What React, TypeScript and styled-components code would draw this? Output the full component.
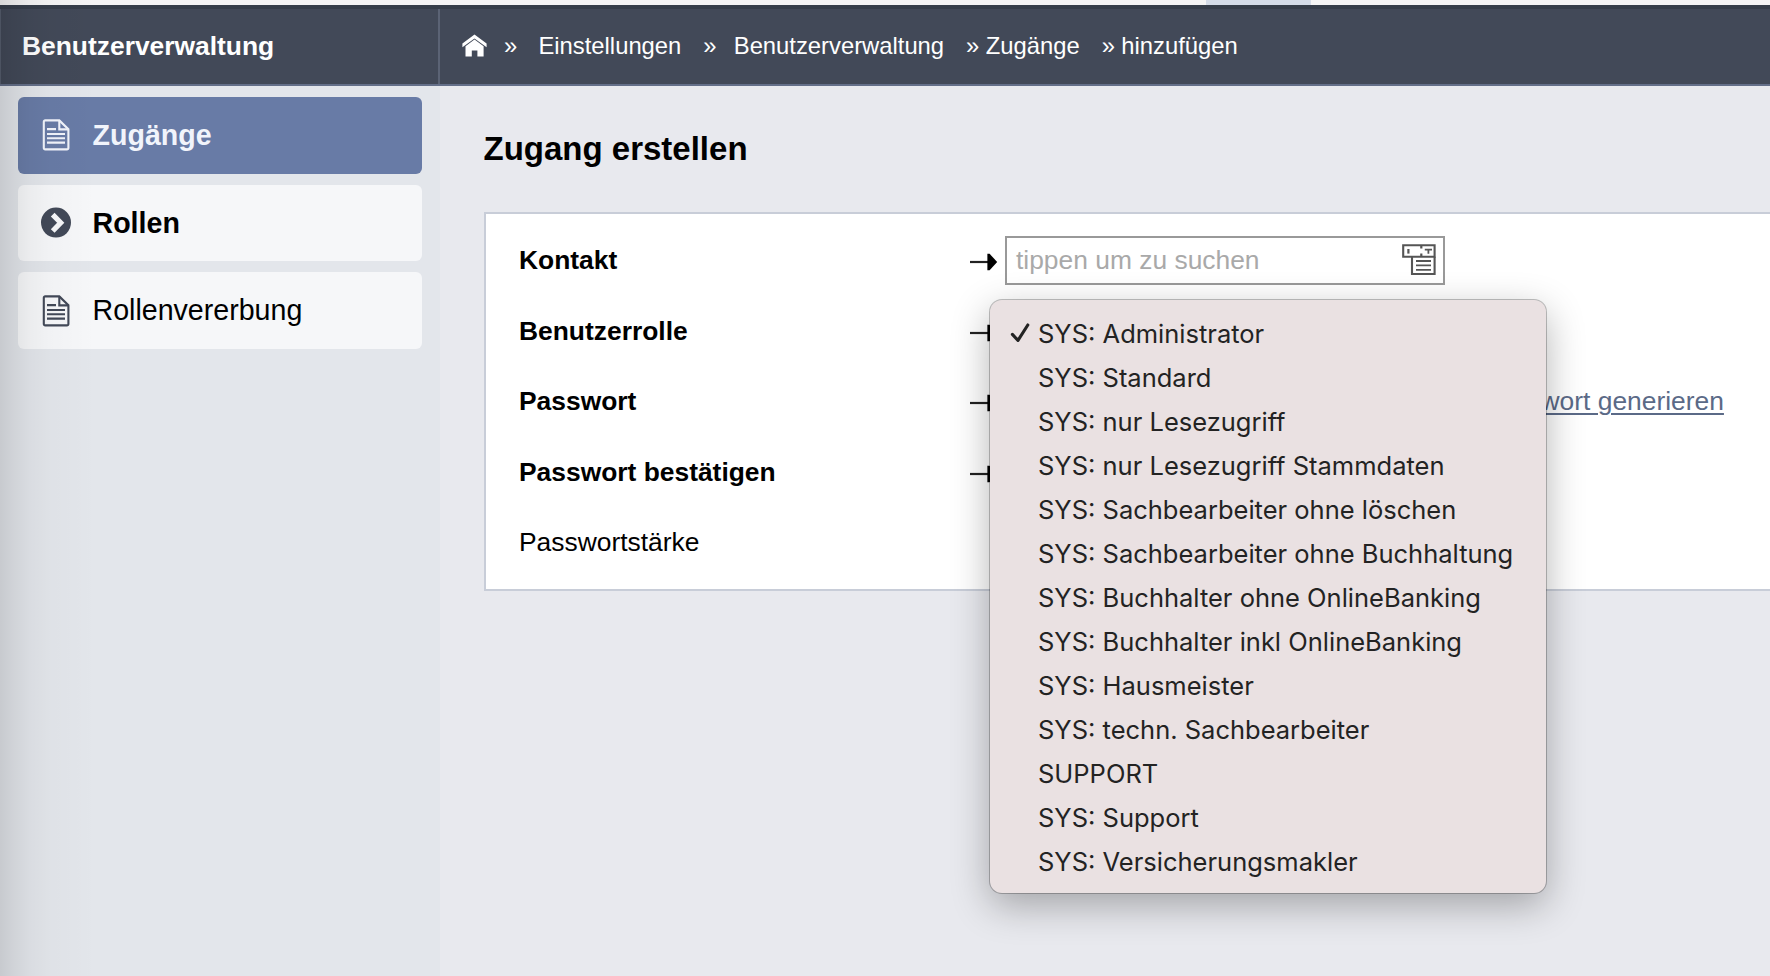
import React from 'react';
import styled, { createGlobalStyle } from 'styled-components';

const GlobalStyle = createGlobalStyle`
  * { box-sizing: border-box; }
  body {
    margin: 0;
    overflow: hidden;
    font-family: 'Liberation Sans', Arial, sans-serif;
    font-size: 26.4px;
    color: #000;
    background: #e8e9ee;
  }
`;

const Page = styled.div`
  position: relative;
  width: 1770px;
  height: 976px;
  overflow: hidden;
  display: flex;
  flex-direction: column;
`;

const TabStrip = styled.div`
  flex: none;
  height: 5px;
  background: #f5f5f5;
  padding-left: 1206px;
`;

const ActiveTab = styled.div`
  width: 105px;
  height: 5px;
  background: #d5dce8;
`;

const Header = styled.header`
  flex: none;
  height: 81px;
  display: flex;
  border-top: 4px solid #363e4a;
  border-bottom: 2px solid #646f89;
  background: #424958;
  color: #fff;
`;

const HeaderTitle = styled.div`
  width: 440px;
  padding: 0 0 1px 21px;
  display: flex;
  align-items: center;
  border-left: 1px solid #565e6e;
  border-right: 2px solid #5b6375;
  font-weight: bold;
`;

const Breadcrumbs = styled.nav`
  display: flex;
  align-items: center;
  padding: 0 0 2px 21.5px;
  font-size: 23.8px;
  white-space: nowrap;
`;

const Separator = styled.span<{ $before: number; $after: number }>`
  margin: 0 ${(p) => p.$after}px 0 ${(p) => p.$before}px;
`;

const Body = styled.div`
  flex: 1;
  display: flex;
`;

const Sidebar = styled.aside`
  flex: none;
  width: 440px;
  padding: 11px 18px;
  display: flex;
  flex-direction: column;
  gap: 11px;
  background: #e3e6eb;
`;

const NavItem = styled.a<{ $active?: boolean; $bold?: boolean }>`
  height: 76.6px;
  padding: ${(p) => (p.$active ? 0 : 1)}px 0 0 23px;
  display: flex;
  align-items: center;
  gap: 21.5px;
  border-radius: 6px;
  font-size: 28.6px;
  font-weight: ${(p) => (p.$bold ? 'bold' : 'normal')};
  color: ${(p) => (p.$active ? '#f1f4fb' : '#000')};
  background: ${(p) => (p.$active ? '#687ba6' : '#f6f7f9')};

  svg {
    flex: none;
    color: ${(p) => (p.$active ? '#f1f4fb' : '#424958')};
  }
`;

const Main = styled.main`
  flex: none;
  width: 1400px;
  padding: 43px 0 0 43.5px;
`;

const Title = styled.h1`
  margin: 0 0 43px;
  height: 40px;
  line-height: 40px;
  font-size: 33px;
`;

const Card = styled.section`
  height: 379px;
  margin-left: 0.5px;
  padding: 11.5px 0 0 33px;
  border: 2px solid #c8cdd8;
  background: #fff;
`;

const FormRow = styled.div`
  height: 70.5px;
  display: flex;
  align-items: center;
`;

const Label = styled.label<{ $required?: boolean }>`
  width: 450.5px;
  font-weight: ${(p) => (p.$required ? 'bold' : 'normal')};
`;

const Field = styled.div`
  margin-left: 7.5px;
  width: 440px;
  height: 49px;
  padding: 0 7.5px 0 9px;
  display: flex;
  align-items: center;
  justify-content: space-between;
  border: 2px solid #999;
  background: #fff;
  color: #a9a9a9;
`;

const GenerateLink = styled.a`
  margin-left: 484.4px;
  color: #5b6a87;
  text-decoration: underline;
  text-decoration-thickness: 2px;
  text-underline-offset: 3px;
`;

const RoleMenu = styled.ul`
  position: absolute;
  left: 990px;
  top: 300px;
  width: 556px;
  height: 592.5px;
  margin: 0;
  padding: 11px 0;
  list-style: none;
  border-radius: 12px;
  background: #eae1e2;
  box-shadow: 0 0 0 1px rgba(0, 0, 0, 0.24), 0 12px 38px rgba(0, 0, 0, 0.3);
  color: #232323;
  font-family: Inter, sans-serif;
  font-size: 25.5px;
`;

const RoleOption = styled.li`
  height: 44px;
  padding-left: 20px;
  display: flex;
  align-items: center;
  white-space: nowrap;
`;

const CheckSlot = styled.span`
  width: 28px;
  display: flex;
`;

const EdgeShade = styled.div`
  position: absolute;
  left: 0;
  top: 0;
  width: 96px;
  height: 976px;
  pointer-events: none;
  background: linear-gradient(
    to right,
    rgba(0, 0, 0, 0.12),
    rgba(0, 0, 0, 0.085) 12px,
    rgba(0, 0, 0, 0.045) 30px,
    rgba(0, 0, 0, 0.018) 50px,
    rgba(0, 0, 0, 0)
  );
`;

const HomeIcon = () => (
  <svg width="25" height="24" viewBox="0 0 25 24" fill="currentColor">
    <path d="M12.5 0.5 24.6 9.6V13.2L12.5 4.4 0.4 13.2V9.6Z" />
    <path d="M12.5 5.6 21.6 12.3V22.6H15.4V16.6H9.8V22.6H3.5V12.3Z" />
  </svg>
);

const DocumentIcon = () => (
  <svg width="30" height="32" viewBox="0 0 30 32" fill="none" stroke="currentColor" strokeWidth="2.1">
    <path d="M4.2 1.4H18.3L27.4 10.3V29a1.4 1.4 0 0 1-1.4 1.4H4.2A1.4 1.4 0 0 1 2.8 29V2.8A1.4 1.4 0 0 1 4.2 1.4Z" />
    <path d="M18.3 1.4V10.4H27.4" />
    <path d="M6 10.1H15M6 15H24M6 19.2H24M6 23.6H24" />
  </svg>
);

const CircleArrowIcon = () => (
  <svg width="30" height="32" viewBox="0 0 30 32" fill="none">
    <circle cx="15" cy="15.6" r="15" fill="currentColor" />
    <path d="M11.7 7.6 19.7 15.8 11.7 24" stroke="#f6f7f9" strokeWidth="5.2" />
  </svg>
);

const ArrowIcon = () => (
  <svg width="28" height="18" viewBox="0 0 28 18" style={{ marginTop: 3 }}>
    <path d="M0 9H19" stroke="#222" strokeWidth="2.2" />
    <path d="M17.4 0.8H19.6L27.2 9 19.6 17.2H17.4Z" fill="#000" />
  </svg>
);

const PickerIcon = () => (
  <svg width="34" height="32" viewBox="0 0 34 32" fill="none" stroke="#555" strokeWidth="2.1" style={{ marginTop: -2 }}>
    <path d="M1.2 1.2H32.6V12.8H1.2Z" />
    <path d="M10 12.8V30H32.6V12.8" />
    <path d="M14 17H29M14 21.3H29M14 25.8H29" strokeWidth="1.8" />
    <path d="M6.4 5V9.6" strokeWidth="2.2" />
    <path d="M19.3 2V4.4M19.3 9.6V12" strokeWidth="2.2" />
    <path d="M22.8 5.6H30M26.4 6V9.8" strokeWidth="1.8" />
  </svg>
);

const CheckIcon = () => (
  <svg width="21" height="20" viewBox="0 0 21 20" fill="none" stroke="#232323" strokeWidth="3.1">
    <path d="M2.4 11.4 8 17.4 17.8 2" strokeLinecap="round" strokeLinejoin="round" />
  </svg>
);

const roles = [
  'SYS: Administrator',
  'SYS: Standard',
  'SYS: nur Lesezugriff',
  'SYS: nur Lesezugriff Stammdaten',
  'SYS: Sachbearbeiter ohne löschen',
  'SYS: Sachbearbeiter ohne Buchhaltung',
  'SYS: Buchhalter ohne OnlineBanking',
  'SYS: Buchhalter inkl OnlineBanking',
  'SYS: Hausmeister',
  'SYS: techn. Sachbearbeiter',
  'SUPPORT',
  'SYS: Support',
  'SYS: Versicherungsmakler',
];

export default function App() {
  return (
    <Page>
      <GlobalStyle />
      <TabStrip>
        <ActiveTab />
      </TabStrip>
      <Header>
        <HeaderTitle>Benutzerverwaltung</HeaderTitle>
        <Breadcrumbs>
          <HomeIcon />
          <Separator $before={17.5} $after={21.2}>»</Separator>
          <span>Einstellungen</span>
          <Separator $before={22} $after={17.2}>»</Separator>
          <span>Benutzerverwaltung</span>
          <Separator $before={22} $after={6.4}>»</Separator>
          <span>Zugänge</span>
          <Separator $before={22} $after={6.4}>»</Separator>
          <span>hinzufügen</span>
        </Breadcrumbs>
      </Header>
      <Body>
        <Sidebar>
          <NavItem $active $bold>
            <DocumentIcon />
            Zugänge
          </NavItem>
          <NavItem $bold>
            <CircleArrowIcon />
            Rollen
          </NavItem>
          <NavItem>
            <DocumentIcon />
            Rollenvererbung
          </NavItem>
        </Sidebar>
        <Main>
          <Title>Zugang erstellen</Title>
          <Card>
            <FormRow>
              <Label $required>Kontakt</Label>
              <ArrowIcon />
              <Field>
                <span>tippen um zu suchen</span>
                <PickerIcon />
              </Field>
            </FormRow>
            <FormRow>
              <Label $required>Benutzerrolle</Label>
              <ArrowIcon />
            </FormRow>
            <FormRow>
              <Label $required>Passwort</Label>
              <ArrowIcon />
              <GenerateLink>Passwort generieren</GenerateLink>
            </FormRow>
            <FormRow>
              <Label $required>Passwort bestätigen</Label>
              <ArrowIcon />
            </FormRow>
            <FormRow>
              <Label>Passwortstärke</Label>
            </FormRow>
          </Card>
        </Main>
      </Body>
      <RoleMenu>
        {roles.map((role, i) => (
          <RoleOption key={role}>
            <CheckSlot>{i === 0 && <CheckIcon />}</CheckSlot>
            {role}
          </RoleOption>
        ))}
      </RoleMenu>
      <EdgeShade />
    </Page>
  );
}
